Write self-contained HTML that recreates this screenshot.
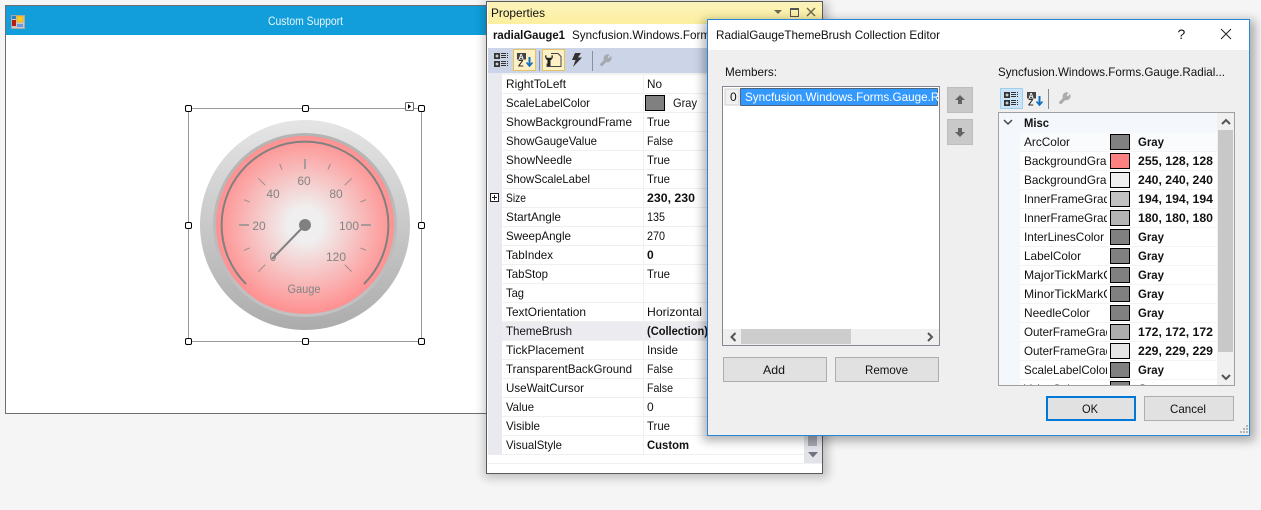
<!DOCTYPE html>
<html><head><meta charset="utf-8"><title>Custom Support</title>
<style>
html,body{margin:0;padding:0;background:#f5f5f5;width:1261px;height:510px;overflow:hidden}
svg{display:block;position:absolute;left:0;top:0}
text{font-family:"Liberation Sans",sans-serif;font-size:12px;fill:#111;white-space:pre}
.b{font-weight:bold}
.g{fill:#848484}
</style></head><body>
<svg width="1261" height="510" viewBox="0 0 1261 510" xmlns="http://www.w3.org/2000/svg">
<defs>
<linearGradient id="o" x1="0" y1="0" x2="0" y2="1"><stop offset="0" stop-color="#e5e5e5"/><stop offset="1" stop-color="#acacac"/></linearGradient>
<linearGradient id="i" x1="0" y1="0" x2="0" y2="1"><stop offset="0" stop-color="#b4b4b4"/><stop offset="1" stop-color="#c2c2c2"/></linearGradient>
<radialGradient id="d"><stop offset="0" stop-color="#f0f0f0"/><stop offset=".2" stop-color="#f0eeee"/><stop offset="1" stop-color="#ff9090"/></radialGradient>
<linearGradient id="y" x1="0" y1="0" x2="0" y2="1"><stop offset="0" stop-color="#fbf3bb"/><stop offset="1" stop-color="#fdef9f"/></linearGradient>
<filter id="s" x="-10%" y="-10%" width="120%" height="120%"><feGaussianBlur stdDeviation="5"/></filter>
<clipPath id="cp"><rect x="1020" y="113" width="87" height="272"/></clipPath>
<clipPath id="cg"><rect x="999" y="113" width="235" height="272"/></clipPath>
<clipPath id="cl"><rect x="740" y="88" width="198" height="18"/></clipPath>
<clipPath id="ct"><rect x="488" y="24" width="220" height="24"/></clipPath>
<clipPath id="cv"><rect x="644" y="73" width="64" height="390"/></clipPath>
<g id="wr"><path d="M1.500 10.500 L5.500 6.500 C4.500 3 6.500 .8 9.500 1 L7.800 3 L8.800 4.700 L10.500 4.700 L11.800 3 C12.300 6 10 8.300 7 7.300 L3 11.500 Z" stroke-width="1.400" stroke-linejoin="round"/></g>
<g id="cat"><rect x="0" y="0" width="6" height="6" fill="#333"/><rect x="0" y="8" width="6" height="6" fill="#333"/><path d="M1.500 3h3M3 1.500v3M1.500 11h3M3 9.500v3" stroke="#fff"/><path d="M7 .5h7M7 2.500h7M7 4.500h7M7 8.500h7M7 10.500h7M7 12.500h7" stroke="#333" stroke-dasharray="5 1"/></g>
<g id="az"><rect x="0" y="0" width="9" height="6.500" fill="#444"/><text x="1.600" y="5.800" style="font-size:7px;font-weight:bold;fill:#fff">A</text><text x="1" y="13.500" style="font-size:9px;font-weight:bold;fill:#333">Z</text><path d="M12.500 4v8" stroke="#0e70c0" stroke-width="2"/><path d="M9.500 9.500l3 3.500 3-3.500" fill="none" stroke="#0e70c0" stroke-width="1.600"/></g>
</defs>

<!-- Form -->
<rect x="5.500" y="5.500" width="490" height="408" fill="#fff" stroke="#6e6e6e"/>
<rect x="6" y="6" width="489" height="29" fill="#119eda"/>
<rect x="11.500" y="15.500" width="13" height="13" fill="#c9c9c9" stroke="#a8a8a8"/>
<rect x="12" y="16" width="4" height="3" fill="#2d7fc0"/>
<rect x="17" y="16" width="6" height="6" fill="#ffc91f" stroke="#e19a00" stroke-width=".5"/>
<rect x="12" y="20" width="4" height="6" fill="#b81c10"/>
<rect x="17" y="24" width="6" height="3" fill="#6d9be0"/>
<text x="268" y="25" textLength="75" lengthAdjust="spacingAndGlyphs" style="fill:#e9f6fc">Custom Support</text>

<!-- selection -->
<rect x="188.500" y="108.500" width="233" height="233" fill="none" stroke="#333" stroke-dasharray="1 1" shape-rendering="crispEdges"/>
<g fill="#fff" stroke="#000">
<rect x="185.500" y="105.500" width="6" height="6" rx="1.500"/><rect x="302.500" y="105.500" width="6" height="6" rx="1.500"/><rect x="418.500" y="105.500" width="6" height="6" rx="1.500"/>
<rect x="185.500" y="222.500" width="6" height="6" rx="1.500"/><rect x="418.500" y="222.500" width="6" height="6" rx="1.500"/>
<rect x="185.500" y="338.500" width="6" height="6" rx="1.500"/><rect x="302.500" y="338.500" width="6" height="6" rx="1.500"/><rect x="418.500" y="338.500" width="6" height="6" rx="1.500"/>
</g>
<rect x="405.500" y="102.500" width="8" height="8" rx="1" fill="#fff" stroke="#666"/>
<path d="M408 104v5l3-2.500z" fill="#000"/>

<!-- gauge -->
<circle cx="305" cy="225" r="105" fill="url(#o)"/>
<circle cx="305" cy="225" r="92" fill="url(#i)"/>
<circle cx="305" cy="225" r="89" fill="url(#d)"/>
<path d="M246 284A83.400 83.400 0 1 1 364 284" fill="none" stroke="#808080" stroke-width="2"/>
<g stroke="#a89a9a" stroke-width="2">
<path d="M305 159v10M239 225h10M361 225h10"/>
</g>
<g stroke="#a08a8a" stroke-width="1">
<path d="M258.300 178.300l7 7M351.700 178.300l-7 7M258.300 271.700l7-7M351.700 271.700l-7-7"/>
<path d="M279.700 164l2.300 5.500M330.300 164l-2.300 5.500M244 199.700l5.500 2.300M366 199.700l-5.500 2.300M244 250.300l5.500-2.300M366 250.300l-5.500-2.300"/>
</g>
<text class="g" x="304" y="185" text-anchor="middle">60</text>
<text class="g" x="273" y="198" text-anchor="middle">40</text>
<text class="g" x="336" y="198" text-anchor="middle">80</text>
<text class="g" x="259" y="230" text-anchor="middle">20</text>
<text class="g" x="349" y="230" text-anchor="middle">100</text>
<text class="g" x="273" y="261" text-anchor="middle">0</text>
<text class="g" x="336" y="261" text-anchor="middle">120</text>
<text class="g" x="287.500" y="293" textLength="33" lengthAdjust="spacingAndGlyphs">Gauge</text>
<path d="M305 225L272 259" stroke="#808080" stroke-width="2"/>
<circle cx="305" cy="225" r="6" fill="#808080"/>

<!-- Properties shadow -->
<rect x="484" y="2" width="344" height="476" fill="#000" opacity=".22" filter="url(#s)"/>
<!-- Properties -->
<rect x="486.500" y="1.500" width="336" height="472" fill="#fff" stroke="#5a5a5a"/>
<rect x="488" y="2" width="334" height="22" fill="url(#y)"/>
<text x="491" y="17" textLength="54" lengthAdjust="spacingAndGlyphs">Properties</text>
<path d="M774 10h8l-4 4z" fill="#6b6b50"/>
<rect x="790.500" y="8.500" width="8" height="8" fill="none" stroke="#555"/><rect x="790" y="8" width="9" height="2" fill="#555"/>
<path d="M807 8l8 8M815 8l-8 8" stroke="#6b6b50" stroke-width="1.500"/>
<g clip-path="url(#ct)">
<text class="b" x="493" y="39" textLength="72" lengthAdjust="spacingAndGlyphs">radialGauge1</text>
<text x="572" y="39" textLength="144" lengthAdjust="spacingAndGlyphs">Syncfusion.Windows.Forms</text>
</g>
<rect x="488" y="48" width="334" height="25" fill="#ccd5e8"/>
<use href="#cat" x="494" y="53"/>
<rect x="513.500" y="49.500" width="22" height="21" fill="#fef0c5" stroke="#e5c365"/>
<use href="#az" x="517" y="53"/>
<path d="M539.500 51v20" stroke="#8591a8"/>
<rect x="542.500" y="49.500" width="22" height="21" fill="#fef0c5" stroke="#e5c365"/>
<path d="M551 53.500h7l3 3v10h-14v-3" fill="none" stroke="#444"/>
<path d="M545.500 55a3.800 3.800 0 0 0 2 5.200v5.800h3v-5.800a3.800 3.800 0 0 0 2-5.200l-1 .5v2.200h-5v-2.200z" fill="#222"/>
<path d="M575 53h6l-3 4.500h4l-9 9.500 2.500-7h-3.500z" fill="#333"/>
<path d="M592.500 51v20" stroke="#8591a8"/>
<use href="#wr" x="599" y="54" fill="#a6a9ae" stroke="#a6a9ae"/>

<rect x="488" y="73" width="14" height="382" fill="#e9eaf0"/>
<rect x="502" y="73" width="320" height="2" fill="#f2f2f2"/>
<!-- rows -->
<rect x="502" y="322" width="320" height="19" fill="#ecebf0"/>
<g stroke="#f0f0f0">
<path d="M502 93.500h320M502 112.500h320M502 131.500h320M502 150.500h320M502 169.500h320M502 188.500h320M502 207.500h320M502 226.500h320M502 245.500h320M502 264.500h320M502 283.500h320M502 302.500h320M502 321.500h320M502 340.500h320M502 359.500h320M502 378.500h320M502 397.500h320M502 416.500h320M502 435.500h320M502 454.500h320M488 463.500h334"/>
<path d="M643.500 75v380"/>
</g>
<text x="506" y="88" textLength="60" lengthAdjust="spacingAndGlyphs">RightToLeft</text>
<text x="506" y="107" textLength="84" lengthAdjust="spacingAndGlyphs">ScaleLabelColor</text>
<text x="506" y="126" textLength="126" lengthAdjust="spacingAndGlyphs">ShowBackgroundFrame</text>
<text x="506" y="145" textLength="91" lengthAdjust="spacingAndGlyphs">ShowGaugeValue</text>
<text x="506" y="164" textLength="66" lengthAdjust="spacingAndGlyphs">ShowNeedle</text>
<text x="506" y="183" textLength="84" lengthAdjust="spacingAndGlyphs">ShowScaleLabel</text>
<text x="506" y="202" textLength="20" lengthAdjust="spacingAndGlyphs">Size</text>
<text x="506" y="221" textLength="55" lengthAdjust="spacingAndGlyphs">StartAngle</text>
<text x="506" y="240" textLength="65" lengthAdjust="spacingAndGlyphs">SweepAngle</text>
<text x="506" y="259" textLength="47" lengthAdjust="spacingAndGlyphs">TabIndex</text>
<text x="506" y="278" textLength="42" lengthAdjust="spacingAndGlyphs">TabStop</text>
<text x="506" y="297" textLength="18" lengthAdjust="spacingAndGlyphs">Tag</text>
<text x="506" y="316" textLength="80" lengthAdjust="spacingAndGlyphs">TextOrientation</text>
<text x="506" y="335" textLength="66" lengthAdjust="spacingAndGlyphs">ThemeBrush</text>
<text x="506" y="354" textLength="78" lengthAdjust="spacingAndGlyphs">TickPlacement</text>
<text x="506" y="373" textLength="126" lengthAdjust="spacingAndGlyphs">TransparentBackGround</text>
<text x="506" y="392" textLength="78" lengthAdjust="spacingAndGlyphs">UseWaitCursor</text>
<text x="506" y="411" textLength="28" lengthAdjust="spacingAndGlyphs">Value</text>
<text x="506" y="430" textLength="34" lengthAdjust="spacingAndGlyphs">Visible</text>
<text x="506" y="449" textLength="56" lengthAdjust="spacingAndGlyphs">VisualStyle</text>
<g clip-path="url(#cv)">
<text x="647" y="88" textLength="15" lengthAdjust="spacingAndGlyphs">No</text>
<rect x="645.500" y="95.500" width="19" height="15" fill="#808080" stroke="#000"/>
<text x="673" y="107" textLength="24" lengthAdjust="spacingAndGlyphs">Gray</text>
<text x="647" y="126" textLength="23" lengthAdjust="spacingAndGlyphs">True</text>
<text x="647" y="145" textLength="26" lengthAdjust="spacingAndGlyphs">False</text>
<text x="647" y="164" textLength="23" lengthAdjust="spacingAndGlyphs">True</text>
<text x="647" y="183" textLength="23" lengthAdjust="spacingAndGlyphs">True</text>
<text class="b" x="647" y="202" textLength="48" lengthAdjust="spacingAndGlyphs">230, 230</text>
<text x="647" y="221" textLength="18" lengthAdjust="spacingAndGlyphs">135</text>
<text x="647" y="240" textLength="18" lengthAdjust="spacingAndGlyphs">270</text>
<text class="b" x="647" y="259">0</text>
<text x="647" y="278" textLength="23" lengthAdjust="spacingAndGlyphs">True</text>
<text x="647" y="316" textLength="55" lengthAdjust="spacingAndGlyphs">Horizontal</text>
<text class="b" x="647" y="335" textLength="61" lengthAdjust="spacingAndGlyphs">(Collection)</text>
<text x="647" y="354" textLength="31" lengthAdjust="spacingAndGlyphs">Inside</text>
<text x="647" y="373" textLength="26" lengthAdjust="spacingAndGlyphs">False</text>
<text x="647" y="392" textLength="26" lengthAdjust="spacingAndGlyphs">False</text>
<text x="647" y="411">0</text>
<text x="647" y="430" textLength="23" lengthAdjust="spacingAndGlyphs">True</text>
<text class="b" x="647" y="449" textLength="42" lengthAdjust="spacingAndGlyphs">Custom</text>
</g>
<rect x="490.500" y="193.500" width="8" height="8" fill="#fff" stroke="#222"/><path d="M492 197.500h5M494.500 195v5" stroke="#222"/>
<rect x="804" y="73" width="18" height="390" fill="#e3e3ea"/>
<rect x="808" y="73" width="9" height="373" fill="#a9a9b3"/>
<path d="M808 452h10l-5 5.500z" fill="#71717f"/>

<!-- Dialog shadow -->
<rect x="703" y="20" width="552" height="421" fill="#000" opacity=".3" filter="url(#s)"/>
<!-- Dialog -->
<rect x="707.500" y="19.500" width="542" height="416" fill="#efefef" stroke="#2a86d6"/>
<rect x="708" y="20" width="541" height="30" fill="#fff"/>
<text x="716" y="39" textLength="224" lengthAdjust="spacingAndGlyphs">RadialGaugeThemeBrush Collection Editor</text>
<text x="1177.500" y="39" style="font-size:14px">?</text>
<path d="M1221 29l10 10M1231 29l-10 10" stroke="#222" stroke-width="1"/>
<text x="725" y="76" textLength="52" lengthAdjust="spacingAndGlyphs">Members:</text>

<rect x="722.500" y="86.500" width="217" height="259" fill="#fff" stroke="#878794"/>
<rect x="725" y="89" width="14" height="16" fill="#f0f0f0" stroke="#d0d0d0"/>
<text x="730" y="101">0</text>
<rect x="740.500" y="88.500" width="197" height="17" fill="#3399ff" stroke="#000" stroke-dasharray="1 1"/>
<g clip-path="url(#cl)"><text x="745" y="101" textLength="219" lengthAdjust="spacingAndGlyphs" style="fill:#fff">Syncfusion.Windows.Forms.Gauge.Radial</text></g>
<rect x="723" y="329" width="216" height="16" fill="#efefef"/>
<rect x="741" y="329" width="110" height="15" fill="#cdcdcd"/>
<path d="M735.500 333l-4 4 4 4M928 333l4 4-4 4" fill="none" stroke="#555" stroke-width="2"/>

<rect x="947.500" y="87.500" width="25" height="25" fill="#c9c9c9" stroke="#bdbdbd"/>
<path d="M960 95l-5 5h3v4h4v-4h3z" fill="#626262"/>
<rect x="947.500" y="119.500" width="25" height="25" fill="#c9c9c9" stroke="#bdbdbd"/>
<path d="M960 137l-5-5h3v-4h4v4h3z" fill="#626262"/>

<rect x="723.500" y="357.500" width="103" height="24" fill="#e1e1e1" stroke="#adadad"/>
<text x="763" y="374" textLength="22" lengthAdjust="spacingAndGlyphs">Add</text>
<rect x="835.500" y="357.500" width="103" height="24" fill="#e1e1e1" stroke="#adadad"/>
<text x="865" y="374" textLength="43" lengthAdjust="spacingAndGlyphs">Remove</text>

<text x="998" y="76" textLength="227" lengthAdjust="spacingAndGlyphs">Syncfusion.Windows.Forms.Gauge.Radial...</text>
<rect x="1000.500" y="88.500" width="22" height="20" fill="#cce4f7" stroke="#9fcfee"/>
<use href="#cat" x="1004" y="92"/>
<use href="#az" x="1027" y="92"/>
<path d="M1048.500 89v20" stroke="#8a8a8a"/>
<use href="#wr" x="1058" y="92" fill="#acacac" stroke="#acacac"/>

<rect x="998.500" y="112.500" width="236" height="273" fill="#fff" stroke="#a0a0a0"/>
<rect x="999" y="113" width="21" height="272" fill="#f4f7fc"/>
<rect x="999" y="113" width="218" height="20" fill="#f4f7fc"/>
<rect x="1020" y="133" width="197" height="18" fill="#f9fbfd"/>
<g stroke="#f3f3f3">
<path d="M1020 151.500h197M1020 170.500h197M1020 189.500h197M1020 208.500h197M1020 227.500h197M1020 246.500h197M1020 265.500h197M1020 284.500h197M1020 303.500h197M1020 322.500h197M1020 341.500h197M1020 360.500h197M1020 379.500h197"/>
</g>
<path d="M1004 120l4 4 4-4" fill="none" stroke="#444" stroke-width="1.500"/>
<text class="b" x="1024" y="127" textLength="25" lengthAdjust="spacingAndGlyphs">Misc</text>
<g clip-path="url(#cp)">
<text x="1024" y="146" textLength="46" lengthAdjust="spacingAndGlyphs">ArcColor</text>
<text x="1024" y="165" textLength="89" lengthAdjust="spacingAndGlyphs">BackgroundGrad</text>
<text x="1024" y="184" textLength="89" lengthAdjust="spacingAndGlyphs">BackgroundGrad</text>
<text x="1024" y="203" textLength="86" lengthAdjust="spacingAndGlyphs">InnerFrameGrad</text>
<text x="1024" y="222" textLength="86" lengthAdjust="spacingAndGlyphs">InnerFrameGrad</text>
<text x="1024" y="241" textLength="80" lengthAdjust="spacingAndGlyphs">InterLinesColor</text>
<text x="1024" y="260" textLength="57" lengthAdjust="spacingAndGlyphs">LabelColor</text>
<text x="1024" y="279" textLength="88" lengthAdjust="spacingAndGlyphs">MajorTickMarkC</text>
<text x="1024" y="298" textLength="88" lengthAdjust="spacingAndGlyphs">MinorTickMarkC</text>
<text x="1024" y="317" textLength="66" lengthAdjust="spacingAndGlyphs">NeedleColor</text>
<text x="1024" y="336" textLength="88" lengthAdjust="spacingAndGlyphs">OuterFrameGrad</text>
<text x="1024" y="355" textLength="88" lengthAdjust="spacingAndGlyphs">OuterFrameGrad</text>
<text x="1024" y="374" textLength="85" lengthAdjust="spacingAndGlyphs">ScaleLabelColor</text>
<text x="1024" y="393" textLength="56" lengthAdjust="spacingAndGlyphs">ValueColor</text>
</g>
<g clip-path="url(#cg)" stroke="#000">
<rect x="1110.500" y="134.500" width="19" height="15" fill="#808080"/>
<rect x="1110.500" y="153.500" width="19" height="15" fill="#ff8080"/>
<rect x="1110.500" y="172.500" width="19" height="15" fill="#f0f0f0"/>
<rect x="1110.500" y="191.500" width="19" height="15" fill="#c2c2c2"/>
<rect x="1110.500" y="210.500" width="19" height="15" fill="#b4b4b4"/>
<rect x="1110.500" y="229.500" width="19" height="15" fill="#808080"/>
<rect x="1110.500" y="248.500" width="19" height="15" fill="#808080"/>
<rect x="1110.500" y="267.500" width="19" height="15" fill="#808080"/>
<rect x="1110.500" y="286.500" width="19" height="15" fill="#808080"/>
<rect x="1110.500" y="305.500" width="19" height="15" fill="#808080"/>
<rect x="1110.500" y="324.500" width="19" height="15" fill="#acacac"/>
<rect x="1110.500" y="343.500" width="19" height="15" fill="#e5e5e5"/>
<rect x="1110.500" y="362.500" width="19" height="15" fill="#808080"/>
<rect x="1110.500" y="381.500" width="19" height="15" fill="#808080"/>
</g>
<g clip-path="url(#cg)">
<text class="b" x="1138" y="146" textLength="26" lengthAdjust="spacingAndGlyphs">Gray</text>
<text class="b" x="1138" y="165" textLength="75" lengthAdjust="spacingAndGlyphs">255, 128, 128</text>
<text class="b" x="1138" y="184" textLength="75" lengthAdjust="spacingAndGlyphs">240, 240, 240</text>
<text class="b" x="1138" y="203" textLength="75" lengthAdjust="spacingAndGlyphs">194, 194, 194</text>
<text class="b" x="1138" y="222" textLength="75" lengthAdjust="spacingAndGlyphs">180, 180, 180</text>
<text class="b" x="1138" y="241" textLength="26" lengthAdjust="spacingAndGlyphs">Gray</text>
<text class="b" x="1138" y="260" textLength="26" lengthAdjust="spacingAndGlyphs">Gray</text>
<text class="b" x="1138" y="279" textLength="26" lengthAdjust="spacingAndGlyphs">Gray</text>
<text class="b" x="1138" y="298" textLength="26" lengthAdjust="spacingAndGlyphs">Gray</text>
<text class="b" x="1138" y="317" textLength="26" lengthAdjust="spacingAndGlyphs">Gray</text>
<text class="b" x="1138" y="336" textLength="75" lengthAdjust="spacingAndGlyphs">172, 172, 172</text>
<text class="b" x="1138" y="355" textLength="75" lengthAdjust="spacingAndGlyphs">229, 229, 229</text>
<text class="b" x="1138" y="374" textLength="26" lengthAdjust="spacingAndGlyphs">Gray</text>
<text class="b" x="1138" y="393" textLength="26" lengthAdjust="spacingAndGlyphs">Gray</text>
</g>
<rect x="1217" y="113" width="17" height="272" fill="#f0f0f0"/>
<rect x="1218" y="130" width="15" height="222" fill="#c8c8c8"/>
<path d="M1222 124l4-4 4 4M1222 375l4 4 4-4" fill="none" stroke="#555" stroke-width="2"/>

<rect x="1047" y="397" width="88" height="23" fill="#e1e1e1" stroke="#0078d7" stroke-width="2"/>
<text x="1082" y="413" textLength="16" lengthAdjust="spacingAndGlyphs">OK</text>
<rect x="1144.500" y="396.500" width="89" height="24" fill="#e1e1e1" stroke="#adadad"/>
<text x="1170" y="413" textLength="36" lengthAdjust="spacingAndGlyphs">Cancel</text>
<g fill="#b5b5b5"><rect x="1246" y="425" width="2" height="2"/><rect x="1243" y="428" width="2" height="2"/><rect x="1246" y="428" width="2" height="2"/><rect x="1240" y="431" width="2" height="2"/><rect x="1243" y="431" width="2" height="2"/><rect x="1246" y="431" width="2" height="2"/></g>
</svg>
</body></html>
